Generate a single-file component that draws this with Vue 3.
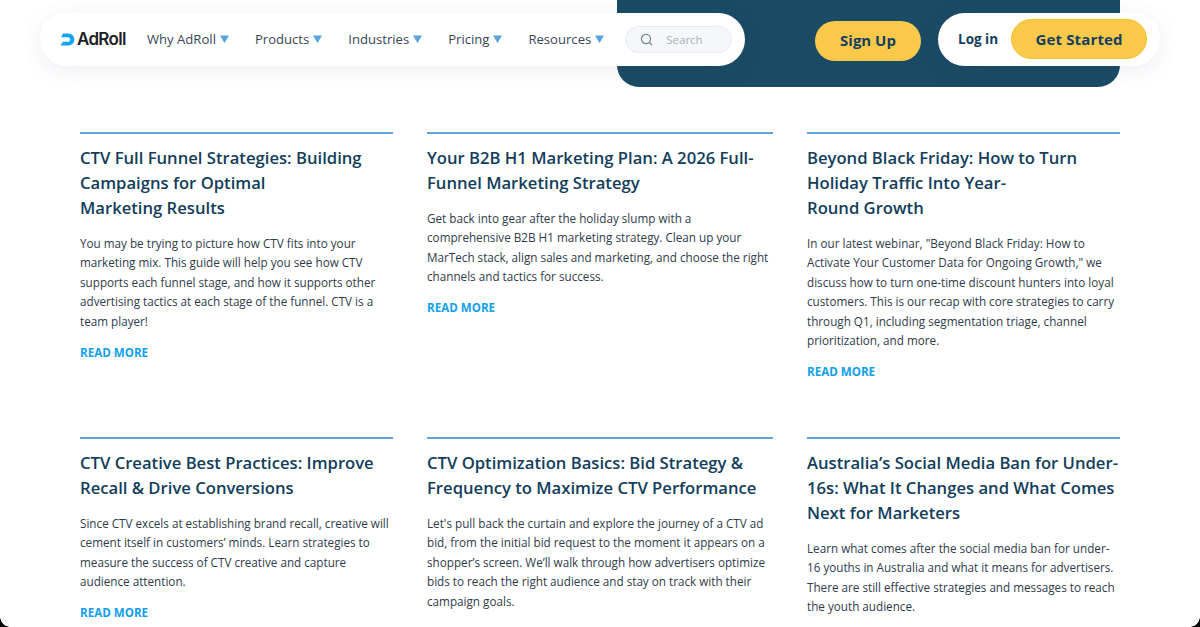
<script setup>
const navItems = ['Why AdRoll', 'Products', 'Industries', 'Pricing', 'Resources']
const cards = [
  { more: true, title: ['CTV Full Funnel Strategies: Building', 'Campaigns for Optimal', 'Marketing Results'], body: ['You may be trying to picture how CTV fits into your', 'marketing mix. This guide will help you see how CTV', 'supports each funnel stage, and how it supports other', 'advertising tactics at each stage of the funnel. CTV is a', 'team player!'] },
  { more: true, title: ['Your B2B H1 Marketing Plan: A 2026 Full-', 'Funnel Marketing Strategy'], body: ['Get back into gear after the holiday slump with a', 'comprehensive B2B H1 marketing strategy. Clean up your', 'MarTech stack, align sales and marketing, and choose the right', 'channels and tactics for success.'] },
  { more: true, title: ['Beyond Black Friday: How to Turn', 'Holiday Traffic Into Year-', 'Round Growth'], body: ['In our latest webinar, "Beyond Black Friday: How to', 'Activate Your Customer Data for Ongoing Growth," we', 'discuss how to turn one-time discount hunters into loyal', 'customers. This is our recap with core strategies to carry', 'through Q1, including segmentation triage, channel', 'prioritization, and more.'] },
  { more: true, title: ['CTV Creative Best Practices: Improve', 'Recall & Drive Conversions'], body: ['Since CTV excels at establishing brand recall, creative will', 'cement itself in customers’ minds. Learn strategies to', 'measure the success of CTV creative and capture', 'audience attention.'] },
  { more: false, title: ['CTV Optimization Basics: Bid Strategy &', 'Frequency to Maximize CTV Performance'], body: ['Let\'s pull back the curtain and explore the journey of a CTV ad', 'bid, from the initial bid request to the moment it appears on a', 'shopper’s screen. We’ll walk through how advertisers optimize', 'bids to reach the right audience and stay on track with their', 'campaign goals.'] },
  { more: false, title: ['Australia’s Social Media Ban for Under-', '16s: What It Changes and What Comes', 'Next for Marketers'], body: ['Learn what comes after the social media ban for under-', '16 youths in Australia and what it means for advertisers.', 'There are still effective strategies and messages to reach', 'the youth audience.'] },
]
</script>

<template>
  <div class="page">
    <div class="hero">
      <a class="signup">Sign Up</a>
    </div>

    <nav class="pill nav">
      <svg class="logo-mark" width="15" height="13" viewBox="0 0 15 13">
        <path d="M3 0.5 H8.4 A5.6 5.6 0 0 1 8.4 12.5 H0.4 L2.8 8.8 H8.4 A2.4 2.4 0 0 0 8.4 4.2 H1 Z" fill="#12a5f0" />
      </svg>
      <span class="logo-text">AdRoll</span>
      <a v-for="item in navItems" :key="item" class="nav-item">
        {{ item }}
        <svg width="9" height="8" viewBox="0 0 9 8"><path d="M0 0.5H9L4.5 8Z" fill="#55a5dc" /></svg>
      </a>
      <div class="search">
        <svg width="13" height="13" viewBox="0 0 13 13" fill="none" stroke="#6d8496" stroke-width="1.2">
          <circle cx="6" cy="6" r="4.6" /><path d="M9.4 9.4 12 12" />
        </svg>
        <span>Search</span>
      </div>
    </nav>

    <div class="pill actions">
      <a class="login">Log in</a>
      <a class="started">Get Started</a>
    </div>

    <main class="grid">
      <article v-for="card in cards" :key="card.title[0]" class="card">
        <h3><span v-for="l in card.title" :key="l" class="ln">{{ l }}</span></h3>
        <p><span v-for="l in card.body" :key="l" class="ln">{{ l }}</span></p>
        <a v-if="card.more" class="more">READ MORE</a>
      </article>
    </main>

    <i class="corner left"></i>
    <i class="corner right"></i>
  </div>
</template>

<style>
html, body { margin: 0; background: #fff; overflow: hidden; }
</style>

<style scoped>
.page {
  position: relative;
  width: 1200px;
  height: 627px;
  overflow: hidden;
  background: #fff;
  font-family: "Open Sans", "Liberation Sans", sans-serif;
}
.hero {
  box-sizing: border-box;
  margin-left: 617px;
  width: 503px;
  height: 87px;
  padding: 21px 0 0 198px;
  background: #1a4a64;
  border-radius: 0 0 22px 22px;
}
.signup {
  display: flex;
  align-items: center;
  justify-content: center;
  box-sizing: border-box;
  width: 106px;
  height: 40px;
  padding-bottom: 2px;
  border-radius: 20px;
  background: #fac949;
  color: #153e62;
  font-size: 15px;
  font-weight: 700;
}
.pill {
  position: absolute;
  top: 13px;
  height: 53px;
  box-sizing: border-box;
  display: flex;
  align-items: center;
  background: #fff;
  border-radius: 27px;
  box-shadow: 0 4px 22px rgba(60, 80, 120, 0.1);
}
.nav {
  left: 40px;
  width: 705px;
  padding-left: 20px;
}
.logo-mark { flex: none; }
.logo-text {
  margin-left: 2px;
  width: 50px;
  padding-bottom: 1px;
  color: #1c2126;
  font-family: "Inter", sans-serif;
  font-size: 17px;
  font-weight: 600;
  letter-spacing: -0.7px;
}
.nav-item {
  display: flex;
  align-items: center;
  gap: 4px;
  margin-left: 20px;
  padding-bottom: 1px;
  color: #3a4656;
  font-size: 13.1px;
  white-space: nowrap;
}
.nav-item svg { margin-top: -1px; }
.nav-item:nth-of-type(n + 2) { margin-left: 26px; }
.search {
  display: flex;
  align-items: center;
  gap: 13px;
  box-sizing: border-box;
  width: 107px;
  height: 27px;
  margin-left: 21px;
  padding-left: 14px;
  border: 1px solid #e6ecf2;
  border-radius: 14px;
  background: #f5f7fa;
  color: #a8b1bb;
  font-size: 11.5px;
}
.actions {
  left: 938px;
  width: 222px;
  padding-left: 20px;
}
.login {
  padding-bottom: 1px;
  color: #153e62;
  font-size: 13.5px;
  font-weight: 700;
}
.started {
  display: flex;
  align-items: center;
  justify-content: center;
  box-sizing: border-box;
  margin: -1px 0 0 13px;
  width: 136px;
  height: 40px;
  border: 1px solid #f6c233;
  border-radius: 20px;
  background: #fac949;
  color: #153e62;
  font-size: 15px;
  font-weight: 700;
  letter-spacing: 0.15px;
}
.grid {
  display: grid;
  grid-template-columns: 313px 346px 313px;
  column-gap: 34px;
  row-gap: 0;
  margin: 45px 0 0 80px;
}
.card {
  box-sizing: border-box;
  height: 305px;
  border-top: 2px solid #5ea6d8;
  padding-top: 11px;
}
.ln { display: block; white-space: nowrap; }
h3 {
  margin: 0;
  color: #123d5b;
  font-size: 16.65px;
  font-weight: 600;
  line-height: 25px;
}
p {
  margin: 13.6px 0 0;
  color: #2f3b4a;
  font-size: 11.7px;
  line-height: 19.5px;
}
.more {
  display: block;
  margin-top: 11.5px;
  color: #12a0ec;
  font-size: 11.6px;
  font-weight: 700;
  line-height: 19px;
}
.corner {
  position: absolute;
  bottom: 0;
  width: 10px;
  height: 10px;
}
.corner.left { left: 0; background: radial-gradient(circle at 100% 0, transparent 9.5px, #000 10px); }
.corner.right { right: 0; background: radial-gradient(circle at 0 0, transparent 9.5px, #000 10px); }
</style>
